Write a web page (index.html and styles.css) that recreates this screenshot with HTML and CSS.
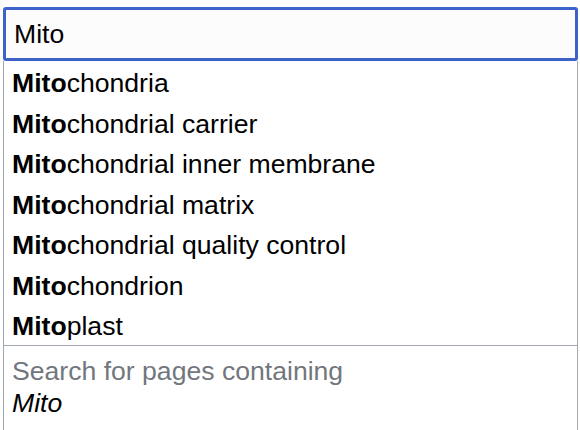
FILE: index.html
```html
<!DOCTYPE html>
<html>
<head>
<meta charset="utf-8">
<link rel="stylesheet" href="styles.css">
</head>
<body>
<div class="search">
  <div class="input">Mito</div>
  <ul class="suggestions">
    <li><b>Mito</b>chondria</li>
    <li><b>Mito</b>chondrial carrier</li>
    <li><b>Mito</b>chondrial inner membrane</li>
    <li><b>Mito</b>chondrial matrix</li>
    <li><b>Mito</b>chondrial quality control</li>
    <li><b>Mito</b>chondrion</li>
    <li><b>Mito</b>plast</li>
    <li class="special">
      <div class="special-label">Search for pages containing</div>
      <div class="special-query">Mito</div>
    </li>
  </ul>
</div>
</body>
</html>
```
FILE: styles.css
```css
html, body {
  margin: 0;
  padding: 0;
  background: #ffffff;
}
body {
  font-family: "Liberation Sans", Arial, sans-serif;
  color: #000000;
  padding: 7px 2px 0 3px;
}
.search {
  width: 575px;
}
.input {
  box-sizing: border-box;
  height: 54px;
  border: 3px solid #3d63c8;
  border-radius: 3px;
  background: #fcfcfc;
  font-size: 26.6px;
  line-height: 49px;
  padding-left: 8px;
}
.suggestions {
  list-style: none;
  margin: 0;
  padding: 0;
  border: 1px solid #a2a9b1;
  border-top: none;
  box-sizing: border-box;
  width: 575px;
}
.suggestions li {
  font-size: 26.6px;
  height: 40.5px;
  line-height: 44px;
  padding-left: 8px;
}
.suggestions li b {
  font-weight: bold;
}
.suggestions li.special {
  height: auto;
  border-top: 1px solid #a2a9b1;
  padding: 9px 0 11px 8px;
  line-height: 32px;
}
.special-label {
  color: #72777d;
}
.special-query {
  font-style: italic;
  color: #000;
}
```
